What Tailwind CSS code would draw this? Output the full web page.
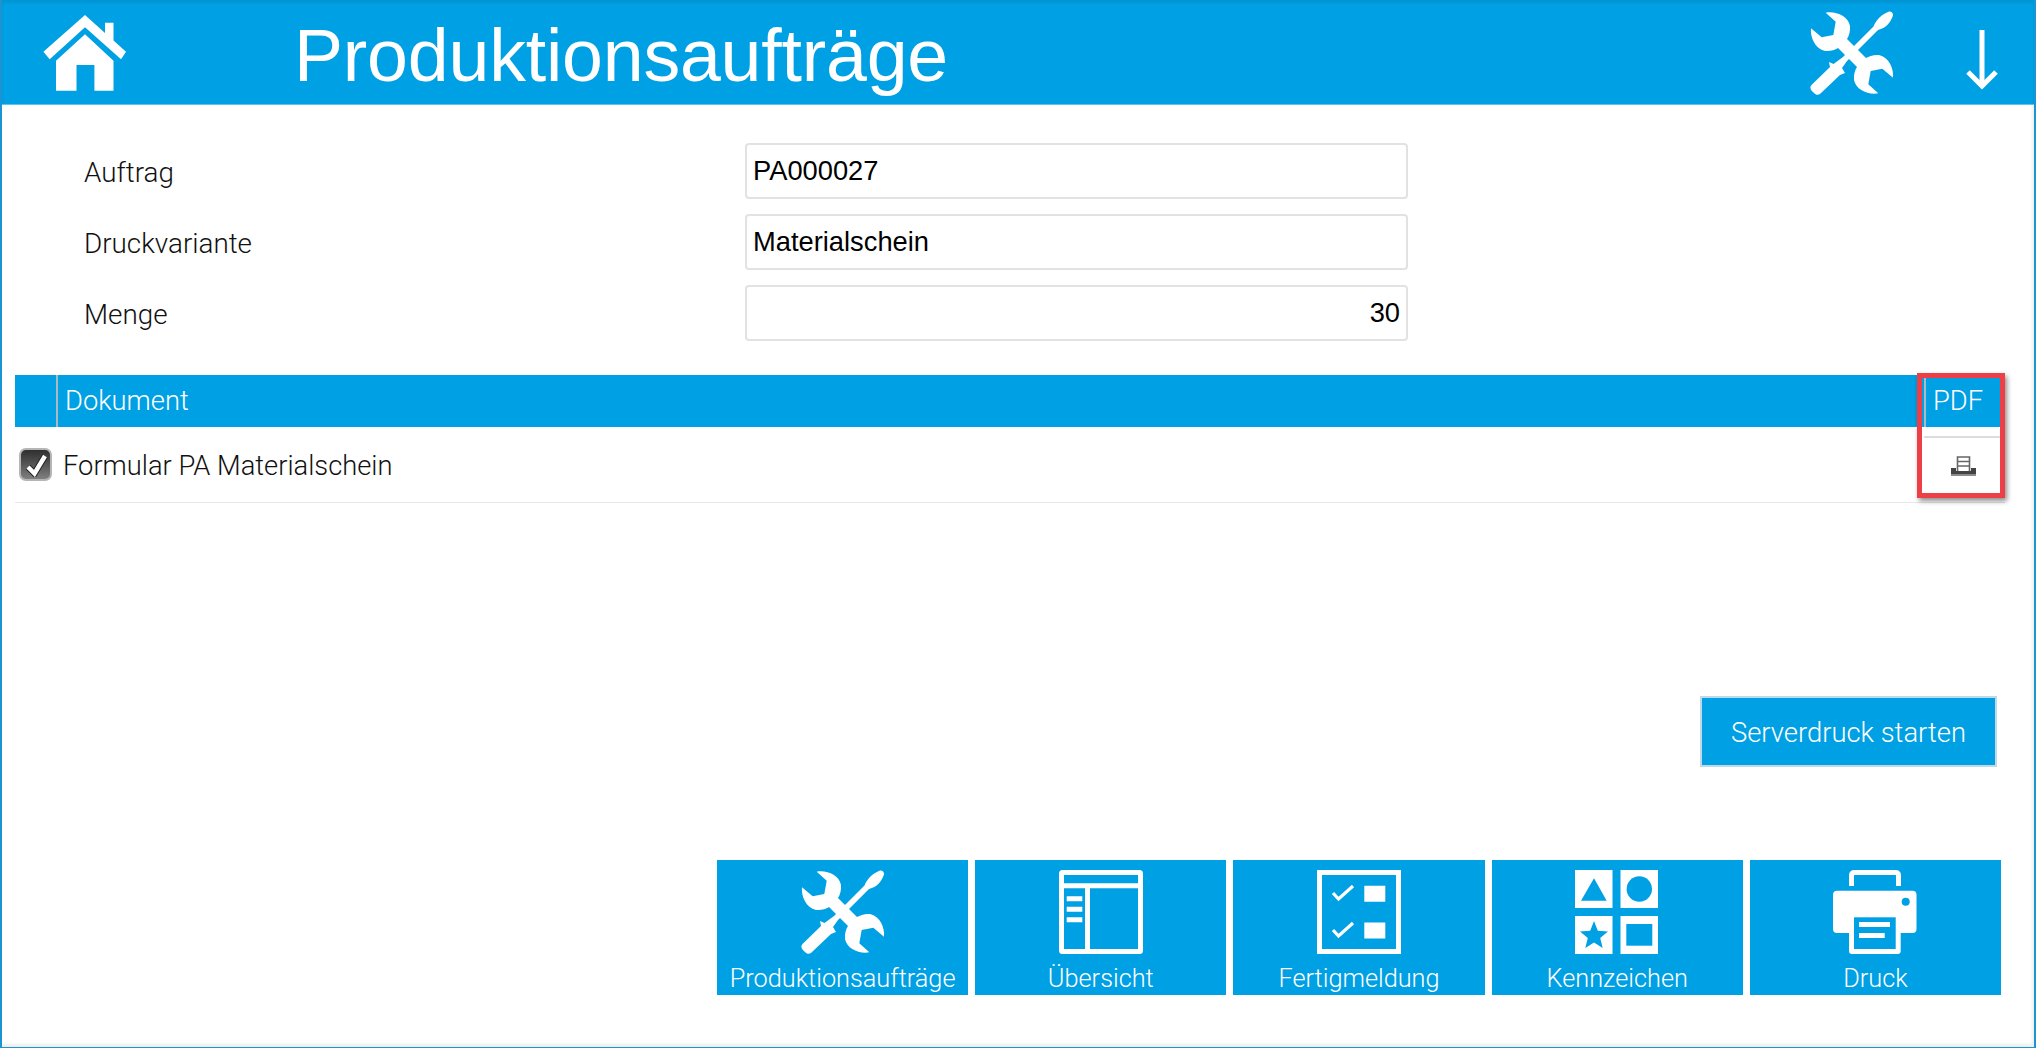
<!DOCTYPE html>
<html lang="de">
<head>
    <meta charset="UTF-8">
    <meta name="viewport" content="width=device-width, initial-scale=1.0">
    <title>Produktionsaufträge</title>
    <script src="https://cdn.jsdelivr.net/npm/@tailwindcss/browser@4"></script>
</head>
<body class="bg-white">

    <!-- shared icons -->
    <svg class="hidden">
        <symbol id="icon-tools" viewBox="0 0 84 84">
            <path fill="currentColor" d="M15.7 1.7C26 0 38 5 40 15C40.5 20 39 25 37 28L56 47C59 45 64 43.5 69 44C79 46 84 58 83 66.7L72.3 57.7L60.7 60L58.3 73.3L68.3 82.3C58 84 46 79 44 69C43.5 64 45 59 47 56L28 37C25 39 20 40.5 15 40C5 38 0 26 1 17.3L11.7 26.3L23.3 24L25.7 10.7Z"/>
            <path fill="currentColor" d="M79 .5C81.5 0 83.5 2.5 83 4.5C80.5 11.5 76 17 68 19L37 50L32 57L35 62L30 64L10.5 82.5C8 84.5 6 84 4 82L1.5 79.5C0 77 0 75.5 1.5 74L20 56L19 51L23.5 53L33 46L63.5 15.5C66.5 8 72 3.5 79 .5Z"/>
        </symbol>
    </svg>

    <div class="relative h-[1048px] w-[2036px] flex flex-col border-l-2 border-r-2 border-b border-[#1b94d4] overflow-hidden font-['Roboto',sans-serif] font-light text-[#111] shadow-[inset_-2px_-3px_3px_rgba(0,0,0,0.07)]">

        <!-- header -->
        <div class="h-[105px] shrink-0 flex items-center bg-[#00a0e4] text-white pl-[41px] pr-[36px] border-b border-[#5cc4f0] shadow-[inset_0_3px_3px_rgba(0,0,0,0.08)]">
            <svg class="w-[83px] h-[76px] shrink-0 mt-[1px]" viewBox="0 0 83 76" fill="currentColor">
                <path d="M42 0L62 18V7.7H70.5V25.5L83 36.7L78 44.3L42 12.3L6.7 44.3L.4 36.7Z"/>
                <path d="M42 19.3L70.5 45.7V75.7H51.4V50H33.5V75.7H13V45.7Z"/>
            </svg>
            <div class="ml-[168px] font-['Liberation_Sans',sans-serif] font-normal text-[73.5px] leading-none mt-[7px] tracking-[-0.2px]">Produktionsaufträge</div>
            <svg class="w-[84px] h-[84px] ml-auto mt-[1px] text-white"><use href="#icon-tools"/></svg>
            <svg class="w-[32px] h-[60px] ml-[72px] mt-[15px]" viewBox="0 0 32 60" fill="none" stroke="currentColor" stroke-width="5">
                <path d="M16 0V57"/>
                <path d="M2 42L16 56L30 42"/>
            </svg>
        </div>

        <!-- form -->
        <div class="flex flex-col gap-[15px] mt-[38px] pl-[82px] text-[27.8px]">
            <div class="flex items-center h-[56px]">
                <div class="w-[661px] mt-[4px]">Auftrag</div>
                <div class="w-[663px] h-full flex items-center px-[6px] bg-white border-2 border-[#e2e2e2] rounded-[4px] font-['Liberation_Sans',sans-serif] font-normal text-[27.3px] text-black">PA000027</div>
            </div>
            <div class="flex items-center h-[56px]">
                <div class="w-[661px] mt-[4px]">Druckvariante</div>
                <div class="w-[663px] h-full flex items-center px-[6px] bg-white border-2 border-[#e2e2e2] rounded-[4px] font-['Liberation_Sans',sans-serif] font-normal text-[27.3px] text-black">Materialschein</div>
            </div>
            <div class="flex items-center h-[56px]">
                <div class="w-[661px] mt-[4px]">Menge</div>
                <div class="w-[663px] h-full flex items-center justify-end px-[6px] bg-white border-2 border-[#e2e2e2] rounded-[4px] font-['Liberation_Sans',sans-serif] font-normal text-[27.3px] text-black">30</div>
            </div>
        </div>

        <!-- document table -->
        <div class="mt-[34px] ml-[13px] w-[1990px] text-[27.3px]">
            <div class="flex h-[52px] bg-[#00a0e4] text-white">
                <div class="w-[41px] shrink-0"></div>
                <div class="flex-1 flex items-center pl-[7px] border-l-2 border-[#a9bcc6]">Dokument</div>
                <div class="w-[81px] flex items-center pl-[7px] border-l-2 border-[#a9bcc6]">PDF</div>
            </div>
            <div class="flex items-center h-[76px] border-b border-[#e8e8e8]">
                <div class="w-[33px] h-[33px] ml-[4px] shrink-0 rounded-[7px] border-2 border-[#b5b5b5] bg-gradient-to-b from-[#2f2f2f] to-[#808080] flex items-center justify-center">
                    <svg class="w-[24px] h-[24px]" viewBox="0 0 24 24" fill="none">
                        <path stroke="#222" stroke-width="6.5" d="M4 14L10.5 20.5L21 3"/>
                        <path stroke="white" stroke-width="4.5" d="M4 14L10.5 20.5L21 3"/>
                    </svg>
                </div>
                <div class="ml-[11px] flex-1 mt-[3px]">Formular PA Materialschein</div>
                <div class="w-[81px] self-stretch mt-[9px] border-t-2 border-[#dcdcdc] pt-[18px] pr-[3px] flex justify-center">
                    <svg class="w-[25px] h-[20px]" viewBox="0 0 25 20">
                        <path fill="none" stroke="#666" stroke-width="1.6" d="M6.5 15V1H18.5V15M6.5 5.5H18.5M6.5 10H18.5"/>
                        <path fill="#444" d="M0 12H5V15H20V12H25V20H0Z"/>
                        <path fill="#8a8a8a" d="M0 18H25V20H0Z"/>
                    </svg>
                </div>
            </div>
        </div>

        <!-- red marker round the PDF column -->
        <div class="absolute left-[1915px] top-[373px] w-[88px] h-[125px] border-[5px] border-[#ee3f46] shadow-[2px_3px_5px_rgba(0,0,0,0.45)]"></div>

        <!-- server print -->
        <div class="flex justify-end mr-[37px] mt-[193px]">
            <button class="w-[297px] h-[71px] pt-[5px] bg-[#00a0e4] border-2 border-[#bfd9e8] text-white text-[27.4px]">Serverdruck starten</button>
        </div>

        <!-- bottom tiles -->
        <div class="grid grid-cols-5 gap-[7px] w-[1284px] ml-[715px] mt-[93px] text-[25.3px] text-white">
            <div class="h-[135px] bg-[#00a0e4] flex flex-col items-center pt-[10px]">
                <svg class="w-[84px] h-[84px]"><use href="#icon-tools"/></svg>
                <div class="mt-[10px] leading-[30px]">Produktionsaufträge</div>
            </div>
            <div class="h-[135px] bg-[#00a0e4] flex flex-col items-center pt-[10px]">
                <svg class="w-[84px] h-[84px]" viewBox="0 0 84 84">
                    <rect x="2.5" y="2.5" width="79" height="79" rx="1" fill="none" stroke="white" stroke-width="5"/>
                    <path fill="white" d="M2 13.3H82V18.3H2ZM26 18H31V82H26ZM7.7 26.3H23.3V31.3H7.7ZM7.7 36.7H23.3V41.7H7.7ZM7.7 47.3H23.3V52.3H7.7Z"/>
                </svg>
                <div class="mt-[10px] leading-[30px]">Übersicht</div>
            </div>
            <div class="h-[135px] bg-[#00a0e4] flex flex-col items-center pt-[10px]">
                <svg class="w-[84px] h-[84px]" viewBox="0 0 84 84">
                    <rect x="2.5" y="2.5" width="79" height="79" fill="none" stroke="white" stroke-width="5"/>
                    <path fill="none" stroke="white" stroke-width="3.2" d="M16 23L21.5 29L36 16M16 60L21.5 66L36 53"/>
                    <path fill="white" d="M47.3 15.7H68.3V31.7H47.3ZM47.3 52.4H68.3V68.4H47.3Z"/>
                </svg>
                <div class="mt-[10px] leading-[30px]">Fertigmeldung</div>
            </div>
            <div class="h-[135px] bg-[#00a0e4] flex flex-col items-center pt-[10px]">
                <svg class="w-[84px] h-[84px]" viewBox="0 0 84 84">
                    <path fill="white" d="M0 0H37.5V38H0ZM45.5 0H83V38H45.5ZM0 46H37.5V84H0ZM45.5 46H83V84H45.5Z"/>
                    <path fill="#00a0e4" d="M19 8.3L31.7 30.7H6Z"/>
                    <circle cx="64.3" cy="19" r="12.7" fill="#00a0e4"/>
                    <path fill="#00a0e4" d="M19 51L22.8 60.8L33 61.5L25.2 68L27.7 78L19 72.5L10.3 78L12.8 68L5 61.5L15.2 60.8Z"/>
                    <path fill="#00a0e4" d="M51.3 54H77.3V75.7H51.3Z"/>
                </svg>
                <div class="mt-[10px] leading-[30px]">Kennzeichen</div>
            </div>
            <div class="h-[135px] bg-[#00a0e4] flex flex-col items-center pt-[10px]">
                <svg class="w-[84px] h-[84px]" viewBox="0 0 84 84">
                    <path fill="none" stroke="white" stroke-width="5" d="M18.5 16V5.5Q18.5 2.5 21.5 2.5H62.5Q65.5 2.5 65.5 5.5V16"/>
                    <rect x="0" y="20.7" width="83.5" height="42.3" rx="4" fill="white"/>
                    <circle cx="72.7" cy="31.7" r="4" fill="#00a0e4"/>
                    <rect x="16" y="47.3" width="51.7" height="36.7" rx="3" fill="white"/>
                    <rect x="21" y="47.3" width="41.7" height="31.7" fill="#00a0e4"/>
                    <path fill="white" d="M26 52H57V57H26ZM26 63H51.7V68H26Z"/>
                </svg>
                <div class="mt-[10px] leading-[30px]">Druck</div>
            </div>
        </div>
    </div>

</body>
</html>
